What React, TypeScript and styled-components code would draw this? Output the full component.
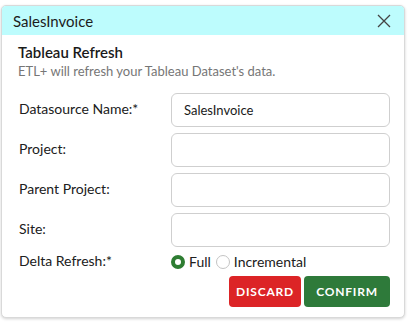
import styled, { createGlobalStyle } from 'styled-components';

const GlobalStyle = createGlobalStyle`
  html, body {
    margin: 0;
    padding: 0;
    background: #ffffff;
  }
  body {
    font-family: 'Lato', 'Open Sans', sans-serif;
  }
`;

const Page = styled.div`
  padding: 5px 3px 5px 1px;
`;

const Dialog = styled.div`
  width: 404px;
  height: 313px;
  box-sizing: border-box;
  border: 1px solid #d9d9d9;
  border-radius: 5px;
  background: #fff;
  box-shadow: 0 1px 3px rgba(0, 0, 0, 0.18);
  overflow: hidden;
  display: flex;
  flex-direction: column;
`;

const Header = styled.div`
  height: 29px;
  background: #bdfcfd;
  display: flex;
  align-items: center;
  justify-content: space-between;
  padding: 0 13px 0 11px;
`;

const HeaderTitle = styled.span`
  font-size: 15px;
  color: #1b1b1b;
`;

const CloseButton = styled.button`
  border: none;
  background: transparent;
  padding: 0;
  width: 14px;
  height: 14px;
  display: flex;
  cursor: pointer;
`;

const Body = styled.div`
  padding: 7px 14px 0 16px;
  display: flex;
  flex-direction: column;
`;

const Title = styled.div`
  font-size: 15px;
  font-weight: 600;
  color: #1a1a1a;
  line-height: 20px;
`;

const Subtitle = styled.div`
  font-size: 13px;
  color: #767676;
  line-height: 18px;
  margin-bottom: 13px;
`;

const Form = styled.div`
  display: flex;
  flex-direction: column;
  gap: 6px;
`;

const Row = styled.div<{ $compact?: boolean }>`
  display: grid;
  grid-template-columns: 153px 1fr;
  align-items: center;
  height: ${p => (p.$compact ? '12px' : 'auto')};
`;

const Label = styled.label`
  font-size: 14px;
  color: #202020;
  padding-left: 1px;
  margin-top: -3px;
`;

const Input = styled.input`
  height: 34px;
  box-sizing: border-box;
  border: 1px solid #cfcfcf;
  border-radius: 6px;
  padding: 0 12px;
  font-family: inherit;
  font-size: 13px;
  color: #1a1a1a;
  outline: none;
`;

const RadioGroup = styled.div`
  display: flex;
  align-items: center;
  gap: 4px;
  font-size: 14px;
  color: #202020;
`;

const RadioDot = styled.span<{ $checked?: boolean }>`
  width: 14px;
  height: 14px;
  box-sizing: border-box;
  border-radius: 50%;
  border: ${p => (p.$checked ? '4px solid #2e7d32' : '1px solid #c4c4c4')};
  background: #fff;
  display: inline-block;
`;

const RadioOption = styled.span`
  display: flex;
  align-items: center;
  gap: 4px;
  margin-right: 1px;
`;

const Actions = styled.div`
  display: flex;
  justify-content: flex-end;
  gap: 3px;
  margin-top: 11px;
`;

const Button = styled.button<{ $tone: 'danger' | 'success'; $width: number }>`
  width: ${p => p.$width}px;
  height: 31px;
  border: none;
  border-radius: 4px;
  padding: 0;
  background: ${p => (p.$tone === 'danger' ? '#dc2426' : '#2e7a3a')};
  color: #fff;
  font-family: inherit;
  font-size: 12px;
  font-weight: 700;
  letter-spacing: 0.8px;
  cursor: pointer;
`;

const fields = [
  { label: 'Datasource Name:*', value: 'SalesInvoice' },
  { label: 'Project:', value: '' },
  { label: 'Parent Project:', value: '' },
  { label: 'Site:', value: '' }
];

const App = () => {
  return (
    <Page>
      <GlobalStyle />
      <Dialog>
        <Header>
          <HeaderTitle>SalesInvoice</HeaderTitle>
          <CloseButton aria-label="close">
            <svg width="14" height="14" viewBox="0 0 14 14">
              <path d="M1 1 L13 13 M13 1 L1 13" stroke="#444" strokeWidth="1.3" />
            </svg>
          </CloseButton>
        </Header>
        <Body>
          <Title>Tableau Refresh</Title>
          <Subtitle>ETL+ will refresh your Tableau Dataset's data.</Subtitle>
          <Form>
            {fields.map(f => (
              <Row key={f.label}>
                <Label>{f.label}</Label>
                <Input defaultValue={f.value} />
              </Row>
            ))}
            <Row $compact>
              <Label>Delta Refresh:*</Label>
              <RadioGroup>
                <RadioOption>
                  <RadioDot $checked />
                  Full
                </RadioOption>
                <RadioOption>
                  <RadioDot />
                  Incremental
                </RadioOption>
              </RadioGroup>
            </Row>
          </Form>
          <Actions>
            <Button $tone="danger" $width={72}>DISCARD</Button>
            <Button $tone="success" $width={86}>CONFIRM</Button>
          </Actions>
        </Body>
      </Dialog>
    </Page>
  );
};

export default App;
